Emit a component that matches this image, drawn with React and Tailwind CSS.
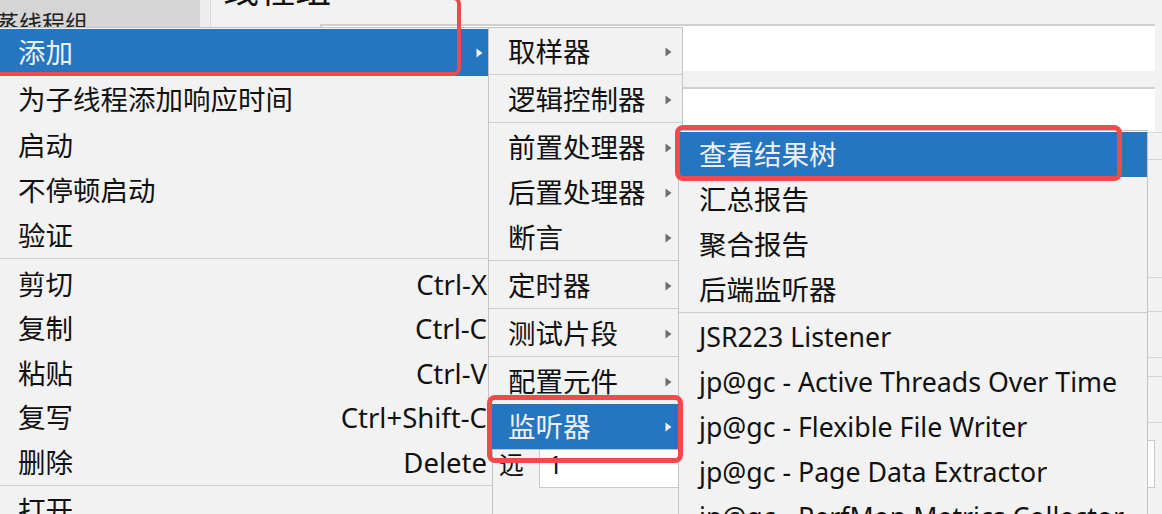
import React from 'react';

const FONT = "font-['Noto_Sans','Noto_Sans_CJK_SC',sans-serif]";

function Arrow({ light }) {
  return (
    <svg width="7" height="10" viewBox="0 0 7 10" className="shrink-0">
      <polygon points="0.5,0.5 6.5,5 0.5,9.5" fill={light ? '#eef2f7' : '#6f6f6f'} />
    </svg>
  );
}

function Row({ label, right, sub, active, cls }) {
  return (
    <div
      className={
        'flex items-center justify-between whitespace-nowrap leading-none ' +
        cls +
        (active ? ' bg-[#2675bf] text-[#edf1f6]' : ' text-[#111111]')
      }
    >
      <span>{label}</span>
      {right ? <span>{right}</span> : null}
      {sub ? <Arrow light={active} /> : null}
    </div>
  );
}

function Sep({ cls }) {
  return <div className={'border-t border-[#cdcdcd] ' + cls} />;
}

export default function App() {
  const m1 = 'pl-[21px] text-[27.5px]';
  const m2 = 'h-[45px] pl-[19px] pr-[10px] text-[27.5px]';
  const m3 = 'h-[45px] pl-[20px] pr-[10px] text-[27.5px]';
  const m3l = 'h-[45px] pl-[20px] pr-[10px] text-[26.7px]';
  return (
    <div className={'relative w-[1162px] h-[514px] overflow-hidden flex bg-[#f0f0f0] ' + FONT}>
      {/* background: tree panel */}
      <div className="w-[200px] bg-[#d5d5d5] pt-[12px] overflow-hidden">
        <div className="ml-[-4px] text-[23px] leading-none text-[#222] whitespace-nowrap">蒸线程组</div>
      </div>
      <div className="w-[11px] bg-[#ededed] border-r border-[#d8d8d8]" />
      {/* background: form panel */}
      <div className="flex-1 flex flex-col bg-[#f2f2f2]">
        <div className="h-[24px] pl-[12px]">
          <div className="mt-[-28px] text-[36px] leading-none text-[#111] whitespace-nowrap">线程组</div>
        </div>
        <div className="h-[47px] flex">
          <div className="w-[109px]" />
          <div className="flex-1 mr-[7px] bg-white border-t-2 border-l-2 border-[#d0d0d0]" />
        </div>
        <div className="h-[16px]" />
        <div className="h-[45px] flex">
          <div className="w-[109px]" />
          <div className="flex-1 mr-[7px] bg-white border-t-2 border-l-2 border-[#d0d0d0]" />
        </div>
        <div className="h-[28px] border-t border-b border-[#d6d6d6]" />
        <div className="h-[118px] border-b border-[#d6d6d6]" />
        <div className="h-[34px] border-b border-[#d6d6d6]" />
        <div className="h-[46px] border-b border-[#d6d6d6]" />
        <div className="h-[19px] border-b border-[#d6d6d6]" />
        <div className="h-[46px] border-b border-[#d6d6d6]" />
        <div className="h-[17px]" />
        <div className="h-[48px] flex items-center">
          <div className="w-[257px]" />
          <div className="w-[71px] flex text-[25px] leading-none text-[#111] whitespace-nowrap">
            <span>永</span>
            <span className="ml-[6px]">远</span>
          </div>
          <div className="flex-1 h-full mr-[7px] bg-white border border-[#c8c8c8] pl-[8px] flex items-center text-[26px] leading-none text-[#111]">
            1
          </div>
        </div>
        <div className="flex-1" />
      </div>

      {/* context menu */}
      <div className="absolute left-[-4px] top-[27px] w-[497px] pt-[1px] bg-[#f2f2f2] border border-[#c4c4c4] flex flex-col z-10">
        <Row label="添加" sub active cls={m1 + ' h-[47px] pr-[9px]'} />
        <Row label="为子线程添加响应时间" cls={m1 + ' h-[47px]'} />
        <Row label="启动" cls={m1 + ' h-[45px]'} />
        <Row label="不停顿启动" cls={m1 + ' h-[45px]'} />
        <Row label="验证" cls={m1 + ' h-[45px]'} />
        <Sep cls="h-[4px]" />
        <Row label="剪切" right="Ctrl-X" cls={m1 + ' h-[44.5px] pr-[5px]'} />
        <Row label="复制" right="Ctrl-C" cls={m1 + ' h-[44.5px] pr-[5px]'} />
        <Row label="粘贴" right="Ctrl-V" cls={m1 + ' h-[44.5px] pr-[5px]'} />
        <Row label="复写" right="Ctrl+Shift-C" cls={m1 + ' h-[44.5px] pr-[5px]'} />
        <Row label="删除" right="Delete" cls={m1 + ' h-[44.5px] pr-[5px]'} />
        <Sep cls="h-[4px]" />
        <Row label="打开" cls={m1 + ' h-[45px]'} />
      </div>

      {/* submenu: 添加 */}
      <div className="absolute left-[488px] top-[27px] w-[195px] pt-[1px] bg-[#f2f2f2] border border-[#c4c4c4] flex flex-col z-20">
        <Row label="取样器" sub cls={m2} />
        <Sep cls="h-[3px]" />
        <Row label="逻辑控制器" sub cls={m2} />
        <Sep cls="h-[3px]" />
        <Row label="前置处理器" sub cls={m2} />
        <Row label="后置处理器" sub cls={m2} />
        <Row label="断言" sub cls={m2} />
        <Sep cls="h-[3px]" />
        <Row label="定时器" sub cls={m2} />
        <Sep cls="h-[3px]" />
        <Row label="测试片段" sub cls={m2} />
        <Sep cls="h-[3px]" />
        <Row label="配置元件" sub cls={m2} />
        <Row label="监听器" sub active cls={m2} />
      </div>

      {/* submenu: 监听器 */}
      <div className="absolute left-[678px] top-[130px] w-[470px] pt-[1px] bg-[#f2f2f2] border border-[#c4c4c4] flex flex-col z-30">
        <Row label="查看结果树" active cls={m3} />
        <Row label="汇总报告" cls={m3} />
        <Row label="聚合报告" cls={m3} />
        <Row label="后端监听器" cls={m3} />
        <Sep cls="h-[3px]" />
        <Row label="JSR223 Listener" cls={m3l} />
        <Row label="jp@gc - Active Threads Over Time" cls={m3l} />
        <Row label="jp@gc - Flexible File Writer" cls={m3l} />
        <Row label="jp@gc - Page Data Extractor" cls={m3l} />
        <Row label="jp@gc - PerfMon Metrics Collector" cls={m3l} />
      </div>

      {/* annotations */}
      <div className="absolute left-[-12px] top-[-4px] w-[473px] h-[80px] border-4 border-[#f04a4a] rounded-[8px] z-40" />
      <div className="absolute left-[675px] top-[125px] w-[447px] h-[56px] border-[5px] border-[#f04a4a] rounded-[8px] z-40" />
      <div className="absolute left-[487px] top-[395px] w-[196px] h-[68px] border-[5px] border-[#f04a4a] rounded-[8px] z-40" />
    </div>
  );
}
